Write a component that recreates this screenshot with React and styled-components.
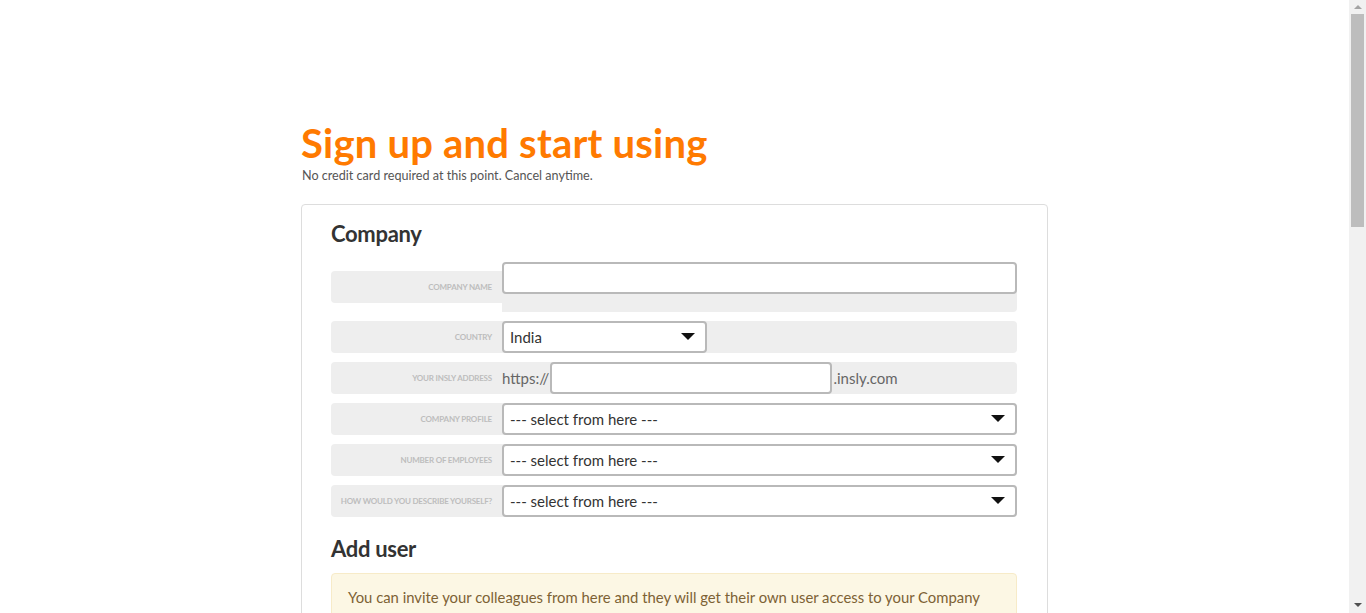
import React from 'react';
import styled, { createGlobalStyle } from 'styled-components';

const GlobalStyle = createGlobalStyle`
  body {
    margin: 0;
    background: #fff;
    font-family: Lato, "Noto Sans", sans-serif;
    color: #333;
  }
`;

const Frame = styled.div`
  margin-right: 17px;
`;

const Scrollbar = styled.div`
  position: fixed;
  top: 0;
  right: 0;
  width: 17px;
  height: 100vh;
  background: #f1f1f1;
  display: flex;
  flex-direction: column;
  align-items: center;
`;

const ScrollArrow = styled.div`
  width: 0;
  height: 0;
  margin: ${p => (p.$down ? 'auto 0 6px' : '5px 0 0')};
  border-left: 4px solid transparent;
  border-right: 4px solid transparent;
  ${p => (p.$down ? 'border-top: 4px solid #505050;' : 'border-bottom: 4px solid #a3a3a3;')}
`;

const ScrollThumb = styled.div`
  width: 13px;
  height: 213px;
  margin-top: 5px;
  background: #bdbdbd;
`;

const Page = styled.div`
  width: 747px;
  margin: 0 auto;
  padding: 119px 0 240px;
`;

const Title = styled.h1`
  margin: 0;
  font-size: 40px;
  line-height: 48px;
  font-weight: 700;
  color: #ff7a00;
  letter-spacing: 0.2px;
`;

const Subtitle = styled.p`
  margin: 1px 0 20px 1px;
  font-size: 12.6px;
  line-height: 16px;
  color: #555;
`;

const Card = styled.div`
  border: 1px solid #ddd;
  border-radius: 4px;
  padding: 16px 30px 40px 29px;
`;

const SectionTitle = styled.h2`
  margin: ${p => p.$top || 0}px 0 ${p => p.$bottom || 0}px;
  font-size: 22px;
  line-height: 26px;
  font-weight: 700;
  color: #333;
  letter-spacing: -0.3px;
`;

const Rows = styled.div`
  display: flex;
  flex-direction: column;
  gap: 9px;
  margin-top: ${p => p.$top ?? 24}px;
`;

const Row = styled.div`
  display: flex;
  align-items: flex-start;
`;

const Label = styled.div`
  width: 171px;
  height: 32px;
  flex-shrink: 0;
  box-sizing: border-box;
  padding-right: 10px;
  display: flex;
  align-items: center;
  justify-content: flex-end;
  background: #eee;
  border-radius: 4px 0 0 4px;
  font-size: 8px;
  font-weight: 700;
  letter-spacing: -0.2px;
  text-transform: uppercase;
  color: #bdbdbd;
  white-space: nowrap;
`;

const Value = styled.div`
  flex: 1;
  min-height: ${p => (p.$tall ? 0 : 32)}px;
  display: flex;
  align-items: ${p => (p.$tall ? 'flex-start' : 'center')};
  background: #eee;
  border-radius: 0 4px 4px 0;
  padding-bottom: ${p => (p.$tall ? 18 : 0)}px;
  box-sizing: border-box;
  font-size: 15px;
  color: #666;
`;

const TextInput = styled.input`
  box-sizing: border-box;
  width: ${p => p.$width || '100%'};
  height: 32px;
  margin: ${p => (p.$raised ? '-9px 0 0' : 0)};
  padding: 0 8px;
  border: 2px solid #b9b9b9;
  border-radius: 4px;
  background: #fff;
  font-family: inherit;
  font-size: 15px;
  outline: none;
`;

const SelectWrap = styled.div`
  position: relative;
  width: ${p => p.$width || '100%'};
  &::after {
    content: '';
    position: absolute;
    right: 12px;
    top: 12px;
    border-left: 7px solid transparent;
    border-right: 7px solid transparent;
    border-top: 7px solid #111;
    pointer-events: none;
  }
`;

const Select = styled.select`
  appearance: none;
  box-sizing: border-box;
  width: 100%;
  height: 32px;
  padding: 0 30px 0 6px;
  border: 2px solid #b9b9b9;
  border-radius: 4px;
  background: #fff;
  font-family: inherit;
  font-size: 15px;
  color: #333;
  outline: none;
`;

const Affix = styled.span`
  padding: 0 ${p => (p.$after ? 0 : 1)}px 0 ${p => (p.$after ? 1 : 0)}px;
  color: #666;
  white-space: nowrap;
`;

const Notice = styled.div`
  border: 1px solid #f7ebc8;
  border-radius: 4px;
  background: #fcf7e4;
  padding: 11px 16px 14px;
  font-size: 14.85px;
  line-height: 25px;
  color: #7d6234;
`;

const Button = styled.button`
  margin-top: 30px;
  padding: 12px 32px;
  border: 0;
  border-radius: 4px;
  background: #ff7a00;
  color: #fff;
  font-family: inherit;
  font-size: 16px;
  font-weight: 700;
`;

const Field = ({ label, children, tall }) => (
  <Row>
    <Label>{label}</Label>
    <Value $tall={tall}>{children}</Value>
  </Row>
);

const Dropdown = ({ value, width }) => (
  <SelectWrap $width={width}>
    <Select defaultValue={value}>
      <option>{value}</option>
    </Select>
  </SelectWrap>
);

export default function App() {
  return (
    <>
      <GlobalStyle />
      <Frame>
        <Page>
          <Title>Sign up and start using</Title>
          <Subtitle>No credit card required at this point. Cancel anytime.</Subtitle>
          <Card>
            <SectionTitle>Company</SectionTitle>
            <Rows>
              <Field label="Company name" tall>
                <TextInput $raised />
              </Field>
              <Field label="Country">
                <Dropdown value="India" width="205px" />
              </Field>
              <Field label="Your insly address">
                <Affix>https://</Affix>
                <TextInput $width="282px" />
                <Affix $after>.insly.com</Affix>
              </Field>
              <Field label="Company profile">
                <Dropdown value="--- select from here ---" />
              </Field>
              <Field label="Number of employees">
                <Dropdown value="--- select from here ---" />
              </Field>
              <Field label="How would you describe yourself?">
                <Dropdown value="--- select from here ---" />
              </Field>
            </Rows>
            <SectionTitle $top={19} $bottom={11}>Add user</SectionTitle>
            <Notice>
              You can invite your colleagues from here and they will get their own user access to your Company
              account. You can also do this later.
            </Notice>
            <Rows>
              <Field label="First name">
                <TextInput />
              </Field>
              <Field label="Last name">
                <TextInput />
              </Field>
              <Field label="E-mail">
                <TextInput />
              </Field>
              <Field label="Phone">
                <TextInput />
              </Field>
            </Rows>
            <SectionTitle $top={24} $bottom={11}>Administrator</SectionTitle>
            <Rows $top={0}>
              <Field label="Name">
                <TextInput />
              </Field>
              <Field label="E-mail">
                <TextInput />
              </Field>
              <Field label="Phone">
                <TextInput />
              </Field>
              <Field label="Password">
                <TextInput type="password" />
              </Field>
              <Field label="Repeat password">
                <TextInput type="password" />
              </Field>
            </Rows>
            <Button>Sign up</Button>
          </Card>
        </Page>
      </Frame>
      <Scrollbar>
        <ScrollArrow />
        <ScrollThumb />
        <ScrollArrow $down />
      </Scrollbar>
    </>
  );
}
